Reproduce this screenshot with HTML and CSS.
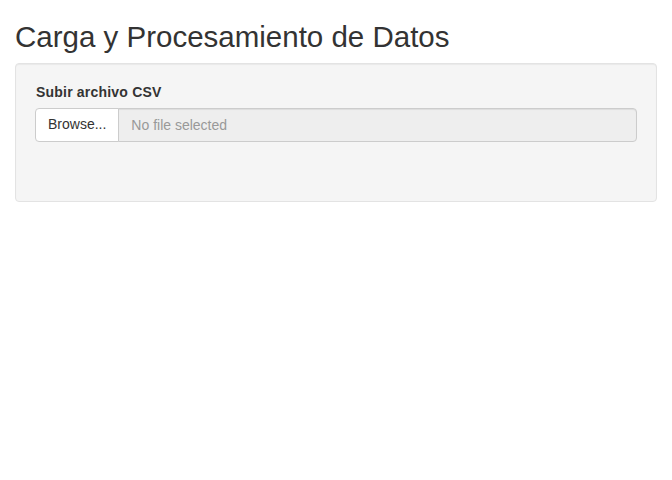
FILE: index.html
```html
<!DOCTYPE html>
<html lang="es">
<head>
<meta charset="utf-8">
<title>Carga y Procesamiento de Datos</title>
<link rel="stylesheet" href="styles.css">
</head>
<body>
<div class="container">
  <h2 class="title">Carga y Procesamiento de Datos</h2>
  <div class="well">
    <div class="form-group">
      <label class="control-label" for="file1">Subir archivo CSV</label>
      <div class="input-group">
        <label class="btn-browse">Browse...<input id="file1" type="file" class="hidden-input"></label>
        <input type="text" class="file-name" placeholder="No file selected" readonly>
      </div>
      <div class="progress"></div>
    </div>
  </div>
</div>
</body>
</html>
```
FILE: styles.css
```css
* { box-sizing: border-box; }
html, body {
  margin: 0;
  background: #fff;
  font-family: "Liberation Sans", Arial, Helvetica, sans-serif;
  font-size: 14px;
  line-height: 1.42857;
  color: #333;
}
.container {
  padding: 0 15px;
}
.title {
  margin: 20px 0 10px;
  font-size: 29.5px;
  font-weight: 500;
  line-height: 1.12;
  color: #333;
}
.well {
  background: #f5f5f5;
  border: 1px solid #e3e3e3;
  border-radius: 4px;
  padding: 19px;
  box-shadow: inset 0 1px 1px rgba(0,0,0,0.05);
}
.form-group {
  margin-bottom: 15px;
}
.control-label {
  display: block;
  font-weight: 700;
  margin: 0 0 5px 1px;
  letter-spacing: 0.2px;
}
.input-group {
  display: flex;
  height: 34px;
}
.btn-browse {
  display: flex;
  align-items: center;
  padding: 6px 12px;
  background: #fff;
  border: 1px solid #ccc;
  border-radius: 4px 0 0 4px;
  color: #333;
  font-weight: 400;
  cursor: pointer;
}
.hidden-input { display: none; }
.file-name {
  flex: 1;
  min-width: 0;
  height: 34px;
  padding: 6px 12px;
  margin-left: -1px;
  background: #eee;
  border: 1px solid #ccc;
  border-radius: 0 4px 4px 0;
  font: inherit;
  color: #555;
  box-shadow: inset 0 1px 1px rgba(0,0,0,0.075);
}
.file-name::placeholder { color: #999; }
.progress {
  height: 25px;
  visibility: hidden;
}
```
